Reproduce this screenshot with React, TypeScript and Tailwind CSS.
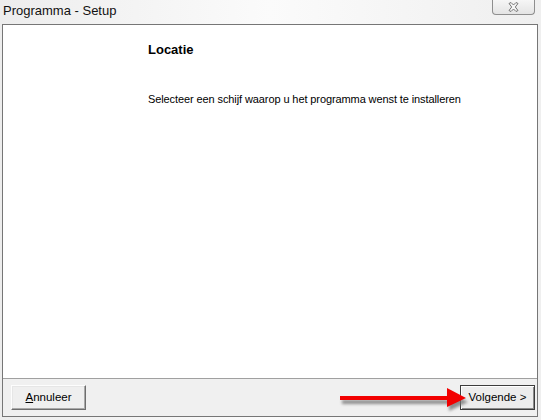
import React from "react";

const ui = { fontFamily: '"Liberation Sans", Arial, sans-serif' };

function CloseGlyph() {
  return (
    <svg width="11" height="10" viewBox="0 0 11 10">
      <path
        d="M1 1.5 L3 0.5 L5.5 3 L8 0.5 L10 1.5 L7.3 5 L10 8.5 L8 9.5 L5.5 7 L3 9.5 L1 8.5 L3.7 5 Z"
        fill="#f4f4f4"
        stroke="#6a6a6a"
        strokeWidth="0.9"
        strokeLinejoin="round"
      />
    </svg>
  );
}

function WinButton({
  children,
  primary = false,
}: {
  children: React.ReactNode;
  primary?: boolean;
}) {
  return (
    <div
      className={
        "flex h-[25px] w-[75px] items-center justify-center text-[11.5px] text-black " +
        (primary
          ? "border border-[#3c3c3c] bg-[#ececec] shadow-[inset_1px_1px_0_#ffffff,inset_-1px_-1px_0_#8a8a8a]"
          : "border border-t-[#fdfdfd] border-l-[#fdfdfd] border-r-[#6e6e6e] border-b-[#6e6e6e] bg-[#efefef] shadow-[inset_-1px_-1px_0_#a9a9a9,inset_1px_1px_0_#e6e6e6]")
      }
    >
      {children}
    </div>
  );
}

function RedArrow() {
  return (
    <svg
      className="pointer-events-none absolute left-[336px] top-[384px]"
      width="136"
      height="30"
      viewBox="0 0 136 30"
    >
      <defs>
        <filter id="sh" x="-10%" y="-40%" width="130%" height="200%">
          <feGaussianBlur stdDeviation="1.6" />
        </filter>
      </defs>
      <g transform="translate(2 4)" filter="url(#sh)" fill="#6d6d6d" opacity="0.75">
        <path d="M4 12 L111 12 L111 4 L130 14 L111 23 L111 16 L4 16 Z" />
      </g>
      <path d="M4 12 L111 12 L111 4 L130 14 L111 23 L111 16 L4 16 Z" fill="#f20000" />
    </svg>
  );
}

export default function App() {
  return (
    <div
      className="relative h-[420px] w-[541px] overflow-hidden bg-gradient-to-r from-[#ededed] via-[#fbfbfb] to-[#efefef]"
      style={ui}
    >
      <div className="flex h-[24px] items-start justify-between">
        <div className="pl-[3px] pt-[3px] text-[13px] leading-[15px] text-[#111]">
          Programma - Setup
        </div>
        <div className="mr-[6px] flex h-[15px] w-[43px] items-center justify-center rounded-b-[4px] border border-t-0 border-[#8e8e8e] bg-gradient-to-b from-[#f6f6f6] to-[#e4e4e4]">
          <CloseGlyph />
        </div>
      </div>

      <div className="mx-[2px] flex h-[393px] w-[536px] flex-col border border-[#767676]">
        <div className="flex-1 bg-white pl-[145px]">
          <div className="pt-[17px] text-[13px] font-bold leading-[16px] text-black">
            Locatie
          </div>
          <div className="pt-[34px] text-[11px] leading-[14px] tracking-[-0.1px] text-black">
            Selecteer een schijf waarop u het programma wenst te installeren
          </div>
        </div>
        <div className="h-[38px] border-t border-[#a0a0a0] bg-[#f0f0f0]">
          <div className="flex items-center justify-between pl-[8px] pr-[2px] pt-[6px]">
            <WinButton>
              <span>
                <span className="underline">A</span>nnuleer
              </span>
            </WinButton>
            <WinButton primary>Volgende &gt;</WinButton>
          </div>
        </div>
      </div>

      <RedArrow />
    </div>
  );
}
